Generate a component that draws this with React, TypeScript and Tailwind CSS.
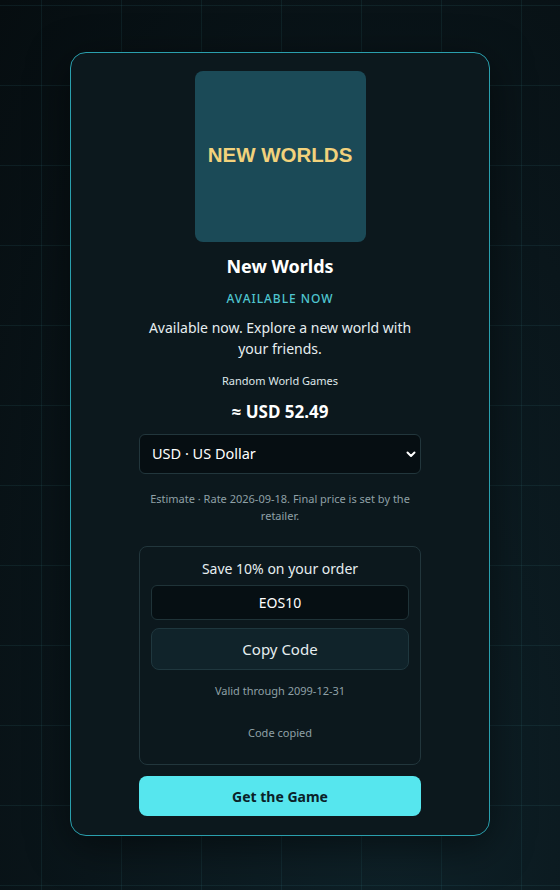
import React from "react";

// Store card for one game, with currency estimate and a coupon
const game = {
  title: "New Worlds",
  status: "AVAILABLE NOW",
  blurb: "Available now. Explore a new world with your friends.",
  publisher: "Random World Games",
  price: "≈ USD 52.49",
  coupon: { label: "Save 10% on your order", code: "EOS10", validThrough: "2099-12-31" },
};

export default function App() {
  return (
    <div
      className="relative min-h-[890px] w-full overflow-hidden bg-[radial-gradient(ellipse_at_70%_90%,#0e2128_0%,#0a161b_55%,#060d10_100%)] pt-[52px] text-white"
      style={{ fontFamily: '"Noto Sans", "Open Sans", sans-serif' }}
    >
      {/* background grid */}
      <div className="pointer-events-none absolute inset-0 bg-[linear-gradient(to_right,rgba(60,140,150,0.12)_1px,transparent_1px),linear-gradient(to_bottom,rgba(60,140,150,0.12)_1px,transparent_1px)] bg-[size:80px_80px] bg-[position:41px_5px]" />

      <div className="relative mx-auto w-[420px] rounded-[16px] border-[1.5px] border-[#2a9fad] bg-[#0c181d] px-5 pb-[19px] pt-[18px] shadow-[0_10px_40px_rgba(0,0,0,0.5)]">
        <div className="mx-auto flex h-[171px] w-[171px] items-center justify-center rounded-[8px] bg-[#1b4a57]">
          <span
            className="-mt-[3px] text-[20.5px] font-bold text-[#f2d27c]"
            style={{ fontFamily: '"Liberation Sans", Arial, sans-serif' }}
          >
            NEW WORLDS
          </span>
        </div>

        <div className="mx-auto flex w-[282px] flex-col items-center text-center">
          <h1 className="mt-[12px] text-[18px] font-bold leading-[24px]">{game.title}</h1>
          <p className="mt-[13px] text-[12px] font-medium leading-[16px] tracking-[0.08em] text-[#4fc5cf]">
            {game.status}
          </p>
          <p className="mt-[10px] text-[14px] leading-[21px] text-[#e6eef0]">{game.blurb}</p>
          <p className="mt-[14px] text-[11px] leading-[16px] text-[#dfe7ea]">{game.publisher}</p>
          <p className="mt-[11px] text-[17px] font-bold leading-[24px]">{game.price}</p>

          <div className="relative mt-[10px] w-full">
            <select className="h-[40px] w-full appearance-none rounded-[6px] border border-[#22363c] bg-[#060e12] px-3 text-[14.5px] text-white outline-none">
              <option>USD · US Dollar</option>
              <option>EUR · Euro</option>
              <option>GBP · British Pound</option>
            </select>
            <svg
              className="pointer-events-none absolute right-[4px] top-1/2 -translate-y-1/2"
              width="12"
              height="12"
              viewBox="0 0 24 24"
              fill="none"
              stroke="white"
              strokeWidth="4"
              strokeLinecap="round"
              strokeLinejoin="round"
            >
              <path d="M5 9l7 7 7-7" />
            </svg>
          </div>

          <p className="mt-[16px] text-[11px] leading-[17px] text-[#8fa0a6]">
            Estimate · Rate 2026-09-18. Final price is set by the retailer.
          </p>

          {/* coupon */}
          <div className="mt-[22px] flex w-full flex-col items-center rounded-[8px] border border-[#22363c] px-[11px] pb-[23px] pt-[12px]">
            <p className="text-[14px] leading-[20px] text-[#e6eef0]">{game.coupon.label}</p>
            <div className="mt-[6px] flex h-[35px] w-full items-center justify-center rounded-[6px] border border-[#1f3338] bg-[#060f13] text-[14px]">
              {game.coupon.code}
            </div>
            <button className="mt-[8px] h-[42px] w-full rounded-[8px] border border-[#1f373e] bg-[#10232a] text-[15px] text-[#e6eef0]">
              Copy Code
            </button>
            <p className="mt-[13px] text-[11px] leading-[16px] text-[#8fa0a6]">
              Valid through {game.coupon.validThrough}
            </p>
            <p className="mt-[26px] text-[11px] leading-[16px] text-[#8fa0a6]">Code copied</p>
          </div>

          <button className="mt-[11px] h-[40px] w-full rounded-[8px] bg-[#56e6ee] text-[14px] font-bold text-[#0b2128]">
            Get the Game
          </button>
        </div>
      </div>
    </div>
  );
}
